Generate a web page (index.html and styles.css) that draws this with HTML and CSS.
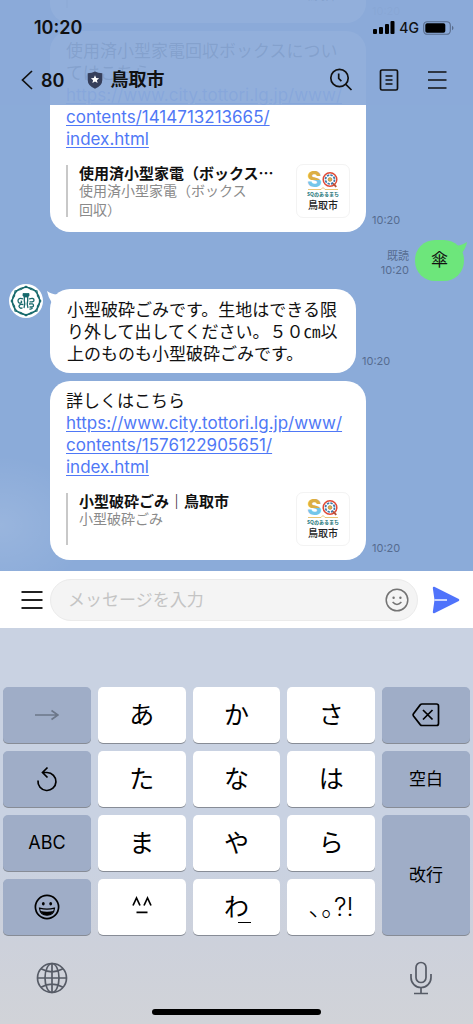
FILE: index.html
```
<!DOCTYPE html>
<html lang="ja">
<head>
  <meta charset="UTF-8" />
  <meta name="viewport" content="width=device-width, initial-scale=1.0"/>
  <title>鳥取市</title>
  <link rel="stylesheet" href="styles.css">
</head>
<body>

  <!-- Shared SQ logo -->
  <svg class="defs" width="0" height="0" aria-hidden="true">
    <defs>
      <linearGradient id="sFill" gradientUnits="userSpaceOnUse" x1="0" y1="0" x2="0" y2="30">
        <stop offset="0.5" stop-color="#dcae45"/>
        <stop offset="0.5" stop-color="#74c6ea"/>
      </linearGradient>
      <symbol id="sqLogo" viewBox="0 0 52 52">
        <text x="10" y="22" class="logo-s" fill="url(#sFill)">S</text>
        <circle cx="33" cy="14.500" r="6.800" fill="#fff" stroke="#df4a37" stroke-width="1.500"/>
        <circle cx="33" cy="14.500" r="4.500" fill="none" stroke="#3a78ad" stroke-width="1.700" stroke-dasharray="2.400 1.100"/>
        <circle cx="33" cy="14.500" r="1.900" fill="#e2b34c" stroke="#8d6a3a" stroke-width=".5"/>
        <path d="M36 18.500l3.300 3.400" stroke="#b5523a" stroke-width="1.800"/>
        <path d="M11 24.500h13l2-2 2 2h13" fill="none" stroke="#e6bf66" stroke-width=".9"/>
        <text x="26" y="31" text-anchor="middle" class="logo-sub">SQのあるまち</text>
        <text x="26" y="44" text-anchor="middle" class="logo-city">鳥取市</text>
      </symbol>
    </defs>
  </svg>

  <div class="screen">

    <!-- Header -->
    <header class="top">
      <div class="status">
        <span class="clock">10:20</span>
        <div class="status-icons">
          <svg width="22" height="14" viewBox="0 0 22 14"><rect x="0" y="8" width="4" height="5" rx="1"/><rect x="6" y="6" width="4" height="7" rx="1"/><rect x="12" y="3" width="4" height="10" rx="1"/><rect x="17.500" y="0" width="4" height="13" rx="1"/></svg>
          <span>4G</span>
          <svg width="31" height="14" viewBox="0 0 31 14"><rect x=".7" y=".7" width="26.600" height="12.600" rx="3.600" fill="none" stroke="#586c8c" stroke-width="1.100"/><rect x="2.300" y="2.300" width="20" height="9.400" rx="1.800"/><path d="M29 4.700q1.500.7 1.500 2.300T29 9.300z" fill="#586c8c"/></svg>
        </div>
      </div>
      <div class="nav">
        <button class="back" aria-label="戻る">
          <svg width="12" height="20" viewBox="0 0 12 20"><path d="M11 1L1.500 10 11 19"/></svg>
          <span>80</span>
        </button>
        <div class="title">
          <svg width="16" height="18" viewBox="0 0 16 18"><path d="M8 .5Q11 2 15.300 2.200V9q0 5.800-7.300 8.700Q.7 14.800.7 9V2.200Q5 2 8 .5z" fill="#363f5b"/><path d="M8 4.300l1.200 2.700 2.900.3-2.200 1.900.7 2.900L8 10.600l-2.600 1.500.7-2.900-2.200-1.900 2.900-.3z" fill="#fff"/></svg>
          <h1>鳥取市</h1>
        </div>
        <div class="nav-icons">
          <button aria-label="検索">
            <svg width="24" height="24" viewBox="0 0 24 24"><circle cx="10.500" cy="10" r="8.700"/><path d="M16.800 16.300L22.500 22M9.700 5.500v5l2.700 2.700"/></svg>
          </button>
          <button aria-label="ノート">
            <svg width="24" height="24" viewBox="0 0 24 24"><rect x="3.500" y="2" width="17" height="20" rx="1.500"/><path d="M8.500 8h7M8.500 12h7M8.500 16h7" stroke-width="1.400"/></svg>
          </button>
          <button aria-label="メニュー">
            <svg width="24" height="24" viewBox="0 0 24 24"><path d="M3 4h18.500M3 12h18.500M3 20h18.500"/></svg>
          </button>
        </div>
      </div>
    </header>

    <!-- Chat -->
    <main class="chat">
      <div class="row">
        <div class="bubble link-bubble">
          <div class="preview">
            <div class="preview-text"></div>
            <svg class="thumb"><use href="#sqLogo"/></svg>
          </div>
        </div>
        <time>10:20</time>
      </div>

      <div class="row">
        <div class="bubble link-bubble">
          <p>使用済小型家電回収ボックスについ<br>てはこちら<br>
            <a href="#">https://www.city.tottori.lg.jp/www/<br>contents/1414713213665/<br>index.html</a></p>
          <div class="preview">
            <div class="preview-text">
              <strong>使用済小型家電（ボックス…</strong>
              <span>使用済小型家電（ボックス<br>回収）</span>
            </div>
            <svg class="thumb"><use href="#sqLogo"/></svg>
          </div>
        </div>
        <time>10:20</time>
      </div>

      <div class="row mine">
        <div class="meta">既読<br><time>10:20</time></div>
        <div class="bubble">
          <svg class="tail" width="14" height="14" viewBox="0 0 14 14"><path d="M0 4Q7 4.500 14 0 13 6 8.500 11.500z"/></svg>
          傘
        </div>
      </div>

      <div class="row">
        <svg class="avatar" viewBox="0 0 34 34">
          <circle cx="17" cy="17" r="17" fill="#fff"/>
          <g fill="none" stroke="#17696c">
            <circle cx="17" cy="17" r="13.600" stroke-width="1.400"/>
            <path d="M17 2.200L22 5.500 28 7 28.500 12 31.800 17 28.500 22 28 27 22 28.500 17 31.800 12 28.500 6 27 5.500 22 2.200 17 5.500 12 6 7 12 5.500z" stroke-width="1.200"/>
            <path d="M14 9.500h6v2.200l-1.200 1.300h-3.600L14 11.700z" fill="#17696c" stroke-width=".8"/>
            <path d="M15.300 13v3.500q1.200 4-.3 7.500M18.700 13v3.500q-1.200 4 .3 7.500" stroke-width="1.300"/>
            <path d="M14 14.800q-4.800-1.500-5 2 .3 2.700 2.900 2.200 1.600-1.200-.2-2.200M14.500 20.500q-4.500-.8-4.500 2 1.200 2.700 3.500 1.200M20 15q5-1.500 5 1t-4.500 1.800M20 20q4.500-.8 4.500 1.400t-4 1.400M20.500 25q2 .5 3-1" stroke-width="1.300"/>
          </g>
        </svg>
        <div class="bubble">
          <svg class="tail" width="14" height="14" viewBox="0 0 14 14"><path d="M14 3Q6 4.500 0 0 1 6 5 12z"/></svg>
          <p>小型破砕ごみです。生地はできる限り外して出してください。５０㎝以上のものも小型破砕ごみです。</p>
        </div>
        <time>10:20</time>
      </div>

      <div class="row">
        <div class="bubble link-bubble">
          <p>詳しくはこちら<br>
            <a href="#">https://www.city.tottori.lg.jp/www/<br>contents/1576122905651/<br>index.html</a></p>
          <div class="preview">
            <div class="preview-text">
              <strong>小型破砕ごみ｜鳥取市</strong>
              <span>小型破砕ごみ</span>
            </div>
            <svg class="thumb"><use href="#sqLogo"/></svg>
          </div>
        </div>
        <time>10:20</time>
      </div>
    </main>

    <!-- Message input -->
    <form class="composer">
      <button type="button" aria-label="メニュー">
        <svg width="22" height="22" viewBox="0 0 22 22"><path d="M.5 3h21M.5 11h21M.5 19h21" stroke="#222" stroke-width="1.900"/></svg>
      </button>
      <div class="field">
        <input type="text" placeholder="メッセージを入力" aria-label="メッセージを入力">
        <button type="button" aria-label="スタンプ">
          <svg width="24" height="24" viewBox="0 0 24 24"><g fill="none" stroke="#747474" stroke-width="1.500"><circle cx="12" cy="12" r="10.800"/><path d="M7.600 14q4.400 4.800 8.800 0"/></g><circle cx="8.600" cy="9.700" r="1.200" fill="#747474"/><circle cx="15.400" cy="9.700" r="1.200" fill="#747474"/></svg>
        </button>
      </div>
      <button type="button" aria-label="送信">
        <svg width="28" height="28" viewBox="0 0 28 28"><path d="M2.300.8L26.800 13q1.200 1 0 2L2.300 27.200Q.8 27.500.8 26L2.500 14 .8 2Q.8.500 2.300.8z" fill="#4f73fb"/><path d="M2.500 14H15" stroke="#fff" stroke-width="1.400"/></svg>
      </button>
    </form>

    <!-- Keyboard -->
    <section class="keyboard">
      <div class="keys">
        <button class="dark muted" aria-label="次へ"><svg width="24" height="12" viewBox="0 0 24 12"><path d="M0 6h22.500M16.500 1.500L23 6l-6.500 4.500"/></svg></button>
        <button>あ</button>
        <button>か</button>
        <button>さ</button>
        <button class="dark" aria-label="削除"><svg width="28" height="24" viewBox="0 0 28 24"><path d="M10 1h14.500q2 0 2 2v17.500q0 2-2 2H10q-1 0-1.800-.9L1.500 13q-.8-1.200 0-2.300L8.200 1.900Q9 1 10 1zM11 7l9.500 9.500M20.500 7L11 16.500"/></svg></button>

        <button class="dark" aria-label="戻す"><svg width="22" height="26" viewBox="0 0 22 26"><path d="M2 14.500A9 9 0 1 0 11 6.500H6.500M11.500 1.500L6.500 6.500 11.500 11.500"/></svg></button>
        <button>た</button>
        <button>な</button>
        <button>は</button>
        <button class="dark word">空白</button>

        <button class="dark abc">ABC</button>
        <button>ま</button>
        <button>や</button>
        <button>ら</button>
        <button class="dark word enter">改行</button>

        <button class="dark" aria-label="絵文字"><svg width="26" height="26" viewBox="0 0 26 26"><circle cx="13" cy="13" r="11.600"/><ellipse cx="9.300" cy="9.800" rx="1.400" ry="1.700" class="solid"/><ellipse cx="16.700" cy="9.800" rx="1.400" ry="1.700" class="solid"/><path d="M5.500 14.200q7.500 2 15 0-.8 7-7.500 7t-7.500-7z" stroke-width="1.200"/><path d="M6.500 17q6.500 1.500 13 0-2 4.200-6.500 4.200T6.500 17z" class="solid"/></svg></button>
        <button aria-label="顔文字"><svg width="20" height="18" viewBox="0 0 20 18"><path d="M1 9.500L4.500 2 8 9.500M12 9.500L15.500 2 19 9.500M4.500 16.300h11"/></svg></button>
        <button aria-label="わ"><span class="wa">わ</span></button>
        <button class="marks">､｡?!</button>
      </div>
      <div class="bottom-icons">
        <button aria-label="地球儀"><svg width="32" height="32" viewBox="0 0 32 32"><circle cx="16" cy="16" r="14.500"/><ellipse cx="16" cy="16" rx="7" ry="14.500"/><path d="M16 1.500v29M1.500 16h29M5 6.800q11 6 22 0M5 25.200q11-6 22 0"/></svg></button>
        <button aria-label="音声入力"><svg width="24" height="34" viewBox="0 0 24 34"><rect x="7" y="1.500" width="10" height="20" rx="5"/><path d="M2 13v3.500a10 10 0 0 0 20 0V13M12 26.500v6M5 32.500h14"/></svg></button>
      </div>
      <div class="home-bar"></div>
    </section>

  </div>

</body>
</html>
```
FILE: styles.css
```
* {
  box-sizing: border-box;
}

body {
  margin: 0;
  font-family: Inter, "Noto Sans CJK JP", sans-serif;
  color: #111;
}

button {
  padding: 0;
  border: none;
  background: none;
  font-family: inherit;
  color: inherit;
  display: flex;
  align-items: center;
  justify-content: center;
}

svg {
  display: block;
  flex-shrink: 0;
}

.defs {
  position: absolute;
}

.screen {
  position: relative;
  height: 100vh;
  display: flex;
  flex-direction: column;
}

/* Header */
.top {
  position: absolute;
  top: 0;
  left: 0;
  right: 0;
  z-index: 1;
  height: 105px;
  background: rgba(139, 170, 217, 0.94);
}

.status {
  display: flex;
  justify-content: space-between;
  align-items: center;
  padding: 18px 19px 0 34px;
  line-height: 20px;
}

.clock {
  font-size: 18px;
  font-weight: 600;
}

.status-icons {
  display: flex;
  align-items: center;
  gap: 4px;
  font-size: 14px;
  font-weight: 500;
}

.nav {
  display: flex;
  align-items: center;
  height: 24px;
  margin-top: 30px;
  padding: 0 24px 0 21px;
}

.back {
  gap: 8px;
  font-size: 18px;
  font-weight: 600;
}

.back svg,
.nav-icons svg {
  fill: none;
  stroke: #111;
  stroke-width: 1.700;
}

.title {
  display: flex;
  align-items: center;
  gap: 7px;
  margin-left: 23px;
}

.title h1 {
  margin: 0;
  font-size: 18px;
  font-weight: 600;
  line-height: 24px;
}

.nav-icons {
  display: flex;
  gap: 24px;
  margin-left: auto;
}

/* Chat */
.chat {
  flex: 1;
  min-height: 0;
  overflow: hidden;
  display: flex;
  flex-direction: column;
  justify-content: flex-end;
  gap: 8px;
  padding: 0 9px 11px;
  background:
    radial-gradient(ellipse 90px 70px at 0 92%, rgba(255, 255, 255, 0.12), transparent),
    #8babd9;
}

.row {
  display: flex;
  align-items: flex-end;
  flex-shrink: 0;
  padding-left: 41px;
  gap: 6px;
}

.bubble {
  position: relative;
  max-width: 306px;
  padding: 10px 17px 8px;
  border-radius: 20px;
  background: #fff;
  font-size: 17px;
  line-height: 22px;
}

.link-bubble {
  width: 316px;
  max-width: 316px;
  padding: 9px 16px 14px;
}

.bubble p {
  margin: 0;
}

.bubble a {
  color: #4f78f6;
  text-underline-offset: 2px;
}

.tail {
  position: absolute;
  top: 2px;
  left: -3px;
  fill: #fff;
}

.avatar {
  width: 34px;
  height: 34px;
  align-self: flex-start;
  margin: -5px 1px 0 -41px;
}

time,
.meta {
  font-size: 11px;
  line-height: 14px;
  color: #566b90;
}

.row > time {
  margin-bottom: 5px;
}

.mine {
  justify-content: flex-end;
}

.mine .bubble {
  padding: 10px 16px;
  line-height: 21px;
  background: #6de67b;
}

.mine .tail {
  left: auto;
  right: -3px;
  fill: #6de67b;
}

.meta {
  text-align: right;
  margin-bottom: 4px;
}

.preview {
  display: flex;
  align-items: center;
  justify-content: space-between;
  margin-top: 14px;
}

.preview-text {
  height: 52px;
  padding-left: 11px;
  border-left: 2px solid #c8c8c8;
  white-space: nowrap;
}

.preview-text strong {
  display: block;
  font-family: "Noto Sans CJK JP", sans-serif;
  font-size: 15px;
  line-height: 16px;
}

.preview-text span {
  display: block;
  font-size: 14px;
  line-height: 19px;
  color: #8a8a8a;
}

.thumb {
  width: 54px;
  height: 54px;
  border: 1px solid #f3f3f3;
  border-radius: 7px;
}

.logo-s {
  font: 800 22px Inter, sans-serif;
}

.logo-sub {
  font: 700 5px "Noto Sans CJK JP", sans-serif;
  fill: #23757a;
}

.logo-city {
  font: 500 10px "Noto Sans CJK JP", sans-serif;
  fill: #222;
}

/* Message input */
.composer {
  display: flex;
  align-items: center;
  height: 57px;
  padding: 0 13px 0 21px;
  background: #fff;
}

.field {
  flex: 1;
  display: flex;
  align-items: center;
  height: 42px;
  margin: 0 14px 0 7px;
  padding: 0 8px 0 17px;
  border: 1px solid #ebebeb;
  border-radius: 21px;
  background: #f4f4f4;
}

.field input {
  flex: 1;
  min-width: 0;
  padding: 0;
  border: none;
  outline: none;
  background: none;
  font-family: inherit;
  font-size: 17px;
}

.field input::placeholder {
  color: #c4c4c4;
}

/* Keyboard */
.keyboard {
  height: 396px;
  padding: 59px 3px 0;
  background: linear-gradient(#c9d2e2 0%, #c9d2e2 55%, #cdd1db 80%, #d1d3d8 100%);
}

.keys {
  display: grid;
  grid-template-columns: repeat(5, 1fr);
  grid-auto-rows: 56px;
  gap: 8px 7px;
}

.keys button {
  padding-bottom: 4px;
  border-radius: 5px;
  background: #fff;
  box-shadow: 0 1px 0 #878c96;
  font-size: 25px;
  color: #000;
}

.keys .dark {
  padding-bottom: 0;
  background: #9fadc7;
}

.keys svg {
  fill: none;
  stroke: #000;
  stroke-width: 1.700;
}

.keys .muted svg {
  stroke: #6c7789;
}

.keys .solid {
  fill: #000;
  stroke: none;
}

.keys .word {
  padding-bottom: 4px;
  font-size: 17px;
}

.keys .abc {
  padding-bottom: 2px;
  font-size: 18px;
}

.keys .marks {
  font-weight: 300;
}

.keys .enter {
  grid-row: span 2;
}

.wa {
  position: relative;
}

.wa::after {
  content: "";
  position: absolute;
  right: -2px;
  bottom: 0;
  width: 13px;
  height: 1px;
  background: #000;
}

.bottom-icons {
  display: flex;
  justify-content: space-between;
  align-items: center;
  height: 34px;
  margin-top: 26px;
  padding: 0 37px 0 33px;
}

.bottom-icons svg {
  fill: none;
  stroke: #565b66;
  stroke-width: 1.700;
}

.home-bar {
  width: 36%;
  height: 6px;
  margin: 14px auto 0;
  border-radius: 3px;
  background: #000;
}
```
